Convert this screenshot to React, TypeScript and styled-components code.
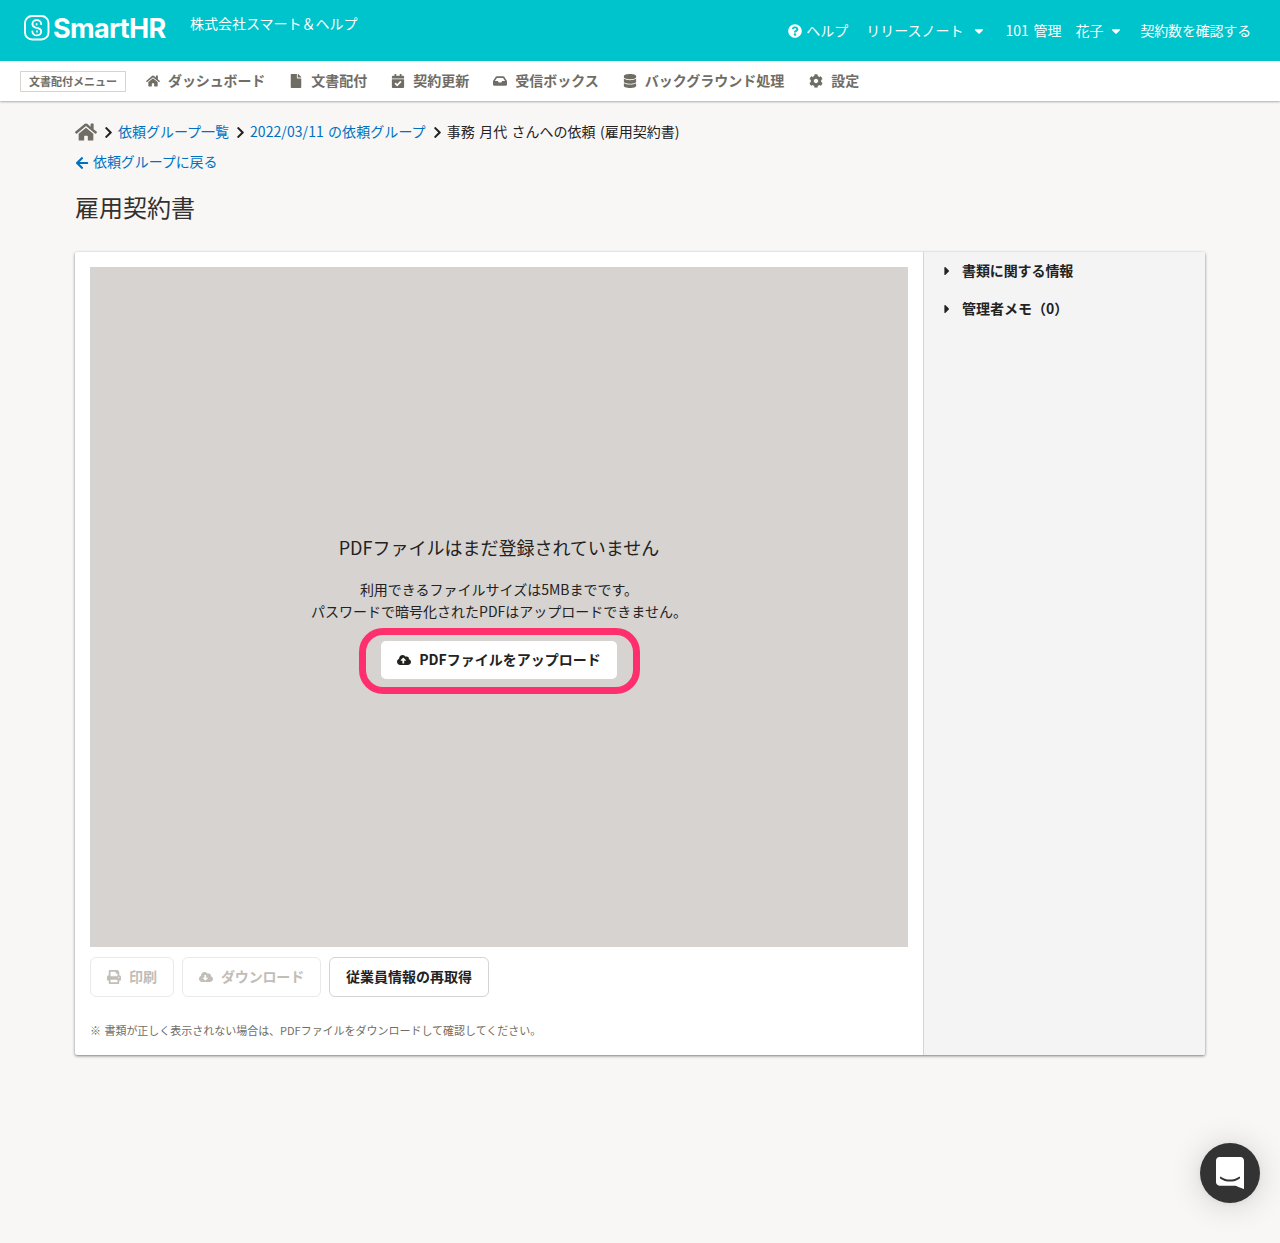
import React from "react";
import styled, { createGlobalStyle } from "styled-components";
import {
  FaArrowLeft,
  FaCalendarCheck,
  FaCaretDown,
  FaCaretRight,
  FaChevronRight,
  FaCloudDownloadAlt,
  FaCloudUploadAlt,
  FaCog,
  FaDatabase,
  FaFile,
  FaHome,
  FaInbox,
  FaPrint,
  FaQuestionCircle,
} from "react-icons/fa";

const GlobalStyle = createGlobalStyle`
  * { box-sizing: border-box; }
  body {
    margin: 0;
    background: #f8f7f6;
    color: #23221f;
    font-family: "Noto Sans CJK JP", "Noto Sans", sans-serif;
    font-size: 14px;
    line-height: 22px;
  }
  svg { display: block; flex: none; }
`;

const Page = styled.div`
  min-height: 1243px;
`;

const Header = styled.header`
  display: flex;
  align-items: flex-start;
  height: 61px;
  padding: 0 29px 0 24px;
  background: #00c4cc;
  color: #fff;
  white-space: nowrap;
`;

const Logo = styled.div`
  display: flex;
  align-items: center;
  gap: 3px;
  width: 146px;
  height: 40px;
  margin-top: 8px;
`;

const LogoText = styled.span`
  padding-top: 1px;
  font-family: Inter, sans-serif;
  font-size: 27px;
  font-weight: 700;
  line-height: 40px;
  letter-spacing: -0.7px;
`;

const Company = styled.div`
  margin: 12px 0 0 20px;
`;

const HeaderLinks = styled.nav`
  display: flex;
  align-items: center;
  margin: 19px 0 0 auto;
`;

const Label = styled.span<{ $tracking?: number; $wordGap?: number }>`
  padding-bottom: 2px;
  letter-spacing: ${(p) => p.$tracking ?? 0}px;
  word-spacing: ${(p) => p.$wordGap ?? 0}px;
`;

const HeaderLink = styled.a<{ $gap: number; $after?: number }>`
  display: flex;
  align-items: center;
  gap: ${(p) => p.$gap}px;
  margin-right: ${(p) => p.$after ?? 0}px;
`;

const NavBar = styled.nav`
  position: relative;
  display: flex;
  align-items: center;
  height: 40px;
  padding: 0 20px;
  background: #fff;
  color: #706d65;
  font-weight: 700;
  white-space: nowrap;
  box-shadow: 0 1px 2px rgba(0, 0, 0, 0.3);
`;

const NavLabel = styled.span`
  height: 21px;
  padding: 0 8px;
  margin: 1px 20px 0 0;
  border: 1px solid #d6d3d0;
  font-size: 11px;
  line-height: 19px;
`;

const NavItem = styled.a<{ $after: number }>`
  display: flex;
  align-items: center;
  gap: 8px;
  margin-right: ${(p) => p.$after}px;
`;

const Main = styled.main`
  width: 1130px;
  margin: 0 auto;
  padding-top: 20px;
`;

const Breadcrumb = styled.div`
  display: flex;
  align-items: center;
  height: 22px;
  white-space: nowrap;
`;

const HomeIcon = styled(FaHome)`
  margin-right: 5px;
  color: #706d65;
`;

const Crumb = styled(Label)`
  margin: 0 5px 0 3px;
  color: #0071c1;
`;

const CurrentCrumb = styled(Label)`
  margin-left: 3px;
`;

const BackLink = styled.a`
  display: flex;
  align-items: center;
  gap: 4px;
  height: 22px;
  margin-top: 9px;
  color: #0071c1;
`;

const BackLabel = styled(Label)`
  padding-bottom: 4px;
`;

const Title = styled.h1`
  margin: 15px 0 27px;
  color: #33312e;
  font-size: 24px;
  font-weight: 400;
  line-height: 36px;
`;

const Card = styled.section`
  display: flex;
  height: 803px;
  border-radius: 2px;
  background: #fff;
  box-shadow: 0 1px 3px rgba(0, 0, 0, 0.5);
  overflow: hidden;
`;

const Document = styled.div`
  flex: 1;
  padding: 15px 15px 0;
`;

const Preview = styled.div`
  display: flex;
  flex-direction: column;
  align-items: center;
  height: 680px;
  padding-top: 266px;
  background: #d6d3d0;
  text-align: center;
`;

const PreviewTitle = styled.h2`
  margin: 0 0 17px;
  font-size: 18px;
  font-weight: 400;
  line-height: 28px;
`;

const PreviewText = styled.p`
  margin: 0;
`;

const UploadArea = styled.div`
  position: relative;
  margin-top: 19px;
`;

const Highlight = styled.div`
  position: absolute;
  inset: -13px -23px -15px -22px;
  border: 7px solid #ff2f6e;
  border-radius: 24px;
  pointer-events: none;
`;

const Button = styled.button<{ $borderless?: boolean }>`
  display: flex;
  align-items: center;
  gap: 8px;
  height: ${(p) => (p.$borderless ? 38 : 40)}px;
  padding: 0 16px;
  border: ${(p) => (p.$borderless ? "0" : "1px solid #d6d3d0")};
  border-radius: ${(p) => (p.$borderless ? 5 : 6)}px;
  background: #fff;
  color: #23221f;
  font: inherit;
  font-weight: 700;
  white-space: nowrap;

  &:disabled {
    border-color: #ebe9e7;
    color: #c1bdb7;
  }
`;

const Actions = styled.div`
  display: flex;
  gap: 8px;
  margin-top: 10px;
`;

const Note = styled.p`
  margin: 25px 0 0;
  color: #706d65;
  font-size: 11px;
  line-height: 17px;
  letter-spacing: -0.02px;
  word-spacing: 1px;
`;

const Sidebar = styled.aside`
  width: 282px;
  border-left: 1px solid #d6d3d0;
  background: #f4f4f4;
`;

const Disclosure = styled.div`
  display: flex;
  align-items: center;
  gap: 8px;
  height: 38px;
  padding-left: 16px;
  font-weight: 700;
`;

const ChatButton = styled.button`
  position: fixed;
  right: 20px;
  bottom: 40px;
  display: flex;
  align-items: center;
  justify-content: center;
  width: 60px;
  height: 60px;
  padding: 0;
  border: 0;
  border-radius: 50%;
  background: #333;
  box-shadow: 0 1px 6px rgba(0, 0, 0, 0.06), 0 2px 32px rgba(0, 0, 0, 0.16);
`;

const navItems = [
  { icon: FaHome, label: "ダッシュボード", tracking: -0.12, after: 24 },
  { icon: FaFile, label: "文書配付", tracking: 0, after: 24 },
  { icon: FaCalendarCheck, label: "契約更新", tracking: 0, after: 24 },
  { icon: FaInbox, label: "受信ボックス", tracking: 0, after: 24 },
  { icon: FaDatabase, label: "バックグラウンド処理", tracking: 0, after: 25 },
  { icon: FaCog, label: "設定", tracking: 0, after: 0 },
];

export default function App() {
  return (
    <Page>
      <GlobalStyle />
      <Header>
        <Logo>
          <svg width="26" height="28" viewBox="0 0 26 28" fill="none">
            <rect x="1" y="2" width="23.5" height="23.5" rx="7" stroke="#fff" strokeWidth="1.9" />
            <path
              d="M17.2 10.2c0-2.2-1.9-4-4.4-4s-4.4 1.6-4.4 3.9c0 1.9 1.4 3 3.2 3.5l2.4.6c1.8.5 3.2 1.5 3.2 3.3 0 2.3-1.9 3.9-4.4 3.9s-4.4-1.8-4.4-4M12.6 9.9v.6M13 17.1v.6"
              stroke="#fff"
              strokeWidth="1.8"
              strokeLinecap="round"
            />
          </svg>
          <LogoText>SmartHR</LogoText>
        </Logo>
        <Company>株式会社スマート＆ヘルプ</Company>
        <HeaderLinks>
          <HeaderLink $gap={4} $after={18}>
            <FaQuestionCircle size={14} />
            <Label>ヘルプ</Label>
          </HeaderLink>
          <HeaderLink $gap={9} $after={19}>
            <Label>リリースノート</Label>
            <FaCaretDown size={14} />
          </HeaderLink>
          <HeaderLink $gap={6} $after={17}>
            <Label $wordGap={1.5}>101 管理　花子</Label>
            <FaCaretDown size={14} />
          </HeaderLink>
          <HeaderLink $gap={0}>
            <Label $tracking={-0.18}>契約数を確認する</Label>
          </HeaderLink>
        </HeaderLinks>
      </Header>
      <NavBar>
        <NavLabel>文書配付メニュー</NavLabel>
        {navItems.map(({ icon: Icon, label, tracking, after }) => (
          <NavItem key={label} $after={after}>
            <Icon size={14} />
            <Label $tracking={tracking}>{label}</Label>
          </NavItem>
        ))}
      </NavBar>
      <Main>
        <Breadcrumb>
          <HomeIcon size={22} />
          <FaChevronRight size={13} />
          <Crumb $tracking={-0.02}>依頼グループ一覧</Crumb>
          <FaChevronRight size={13} />
          <Crumb $tracking={0.07} $wordGap={1}>2022/03/11 の依頼グループ</Crumb>
          <FaChevronRight size={13} />
          <CurrentCrumb $wordGap={1.3}>事務 月代 さんへの依頼 (雇用契約書)</CurrentCrumb>
        </Breadcrumb>
        <BackLink>
          <FaArrowLeft size={14} />
          <BackLabel $tracking={-0.08}>依頼グループに戻る</BackLabel>
        </BackLink>
        <Title>雇用契約書</Title>
        <Card>
          <Document>
            <Preview>
              <PreviewTitle>PDFファイルはまだ登録されていません</PreviewTitle>
              <PreviewText>利用できるファイルサイズは5MBまでです。</PreviewText>
              <PreviewText>パスワードで暗号化されたPDFはアップロードできません。</PreviewText>
              <UploadArea>
                <Button $borderless>
                  <FaCloudUploadAlt size={14} />
                  <Label>PDFファイルをアップロード</Label>
                </Button>
                <Highlight />
              </UploadArea>
            </Preview>
            <Actions>
              <Button disabled>
                <FaPrint size={14} />
                <Label>印刷</Label>
              </Button>
              <Button disabled>
                <FaCloudDownloadAlt size={14} />
                <Label $tracking={-0.16}>ダウンロード</Label>
              </Button>
              <Button>
                <Label>従業員情報の再取得</Label>
              </Button>
            </Actions>
            <Note>※ 書類が正しく表示されない場合は、PDFファイルをダウンロードして確認してください。</Note>
          </Document>
          <Sidebar>
            <Disclosure>
              <FaCaretRight size={14} />
              <Label $tracking={-0.1}>書類に関する情報</Label>
            </Disclosure>
            <Disclosure>
              <FaCaretRight size={14} />
              <Label>管理者メモ（0）</Label>
            </Disclosure>
          </Sidebar>
        </Card>
      </Main>
      <ChatButton aria-label="チャット">
        <svg width="28" height="32" viewBox="0 0 28 32">
          <path
            fill="#fff"
            d="M28 32s-4.714-1.855-8.527-3.34H3.437C1.54 28.66 0 27.026 0 25.013V3.644C0 1.633 1.54 0 3.437 0h21.125c1.898 0 3.437 1.632 3.437 3.645v18.404H28V32zm-4.139-11.982a.88.88 0 00-1.292-.105c-.03.026-3.015 2.681-8.57 2.681-5.486 0-8.517-2.636-8.571-2.684a.88.88 0 00-1.29.107 1.01 1.01 0 00-.219.708.992.992 0 00.318.664c.142.128 3.537 3.15 9.762 3.15 6.226 0 9.621-3.022 9.763-3.15a.992.992 0 00.317-.664 1.01 1.01 0 00-.218-.707z"
          />
        </svg>
      </ChatButton>
    </Page>
  );
}
